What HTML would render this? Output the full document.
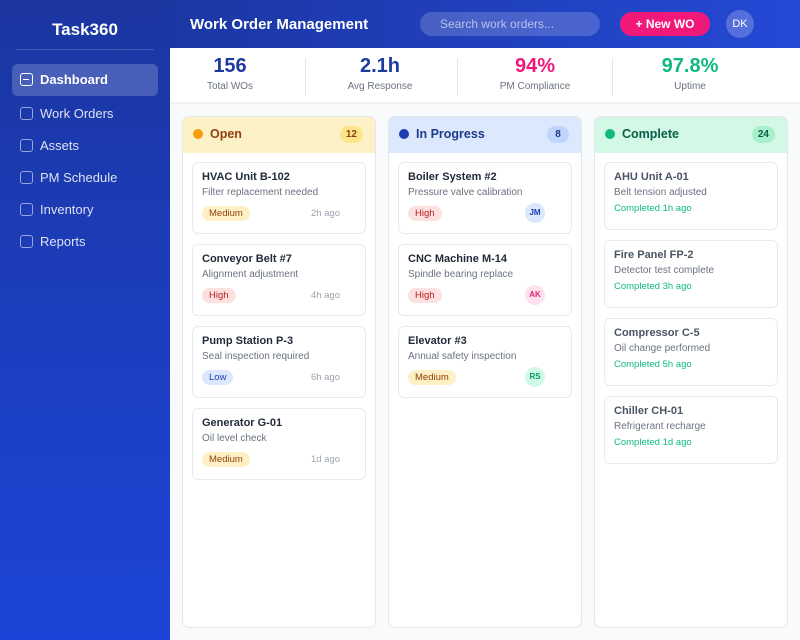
<!DOCTYPE html><html><head><style>
*{margin:0;padding:0;box-sizing:border-box}
body{width:800px;height:640px;overflow:hidden;font-family:"Liberation Sans",sans-serif;background:#f8fafc;position:relative}
.abs{position:absolute}
.side{left:0;top:0;width:170px;height:640px;background:linear-gradient(180deg,#1b36a0 0%,#1c3fc4 60%,#1d44d6 100%)}
.logo{left:0;width:170px;top:20px;text-align:center;color:#fff;font-weight:bold;font-size:17px}
.sl{left:16px;top:49px;width:138px;height:1px;background:rgba(255,255,255,.18)}
.nav{left:12px;width:146px;height:32px;color:rgba(255,255,255,.85);font-size:13px;line-height:32px;padding-left:28px}
.nav i{position:absolute;left:8px;top:9px;width:13px;height:13px;border:1.5px solid rgba(255,255,255,.55);border-radius:3px}
.nav.act{background:rgba(255,255,255,.2);border-radius:6px;color:#fff;font-weight:bold}
.nav.act i{border-color:#fff}
.nav.act i:after{content:"";position:absolute;left:2px;top:4.5px;width:6px;height:1.5px;background:#fff}
.hdr{left:170px;top:0;width:630px;height:48px;background:linear-gradient(90deg,#1b37a3,#2549d6)}
.title{left:190px;top:16px;color:#fff;font-weight:bold;font-size:15px}
.search{left:420px;top:12px;width:180px;height:24px;border-radius:12px;background:rgba(255,255,255,.18);color:rgba(255,255,255,.6);font-size:12px;line-height:24px;padding-left:20px}
.btn{left:620px;top:12px;width:90px;height:24px;border-radius:12px;background:#f0197a;color:#fff;font-weight:bold;font-size:12px;line-height:24px;text-align:center}
.av{left:726px;top:10px;width:28px;height:28px;border-radius:50%;background:rgba(255,255,255,.22);color:#fff;font-size:11px;line-height:28px;text-align:center}
.stats{left:170px;top:48px;width:630px;height:56px;background:#fff;border-bottom:2px solid #eef0f4}
.st{top:54px;width:150px;text-align:center}
.st b{display:block;font-size:20px;line-height:24px}
.st span{display:block;font-size:10px;color:#6b7280;margin-top:3px}
.div{top:58px;width:1px;height:38px;background:#e5e7eb}
.col{top:116px;width:194px;height:512px;background:#fff;border:1px solid #e5e7eb;border-radius:7px;overflow:hidden}
.ch{height:36px;line-height:35px;padding-left:27px;font-weight:bold;font-size:12.5px;position:relative}
.ch .dot{position:absolute;left:10px;top:12px;width:10px;height:10px;border-radius:50%}
.ch .cnt{position:absolute;right:12px;top:9px;height:17px;min-width:22px;padding:0 6px;border-radius:9px;font-size:10px;line-height:17px;text-align:center}
.card{left:9px;width:174px;height:72px;border:1.5px solid #e8eaee;border-radius:6px;background:#fff}
.card h4{position:absolute;left:9px;top:8px;font-size:11px;color:#1f2937}
.card p{position:absolute;left:9px;top:24px;font-size:10px;color:#6b7280}
.tag{position:absolute;left:9px;top:43px;height:15px;padding:0 7px;border-radius:8px;font-size:9.5px;line-height:15px}
.med{background:#fdf0c4;color:#92400e}.high{background:#fde0e0;color:#b91c1c}.low{background:#dbe7fd;color:#1e40af}
.ago{position:absolute;right:25px;top:45px;font-size:9.5px;color:#9ca3af}
.ini{position:absolute;right:26px;top:40px;width:20px;height:20px;border-radius:50%;font-size:8px;font-weight:bold;line-height:20px;text-align:center}
.cc{height:68px}
.cc h4{color:#4b5563}
.done{position:absolute;left:9px;top:40px;font-size:9.5px;color:#10b981}
</style></head><body>
<div class="abs side"></div>
<div class="abs logo">Task360</div>
<div class="abs sl"></div>
<div class="abs nav act" style="top:64px"><i></i>Dashboard</div>
<div class="abs nav" style="top:98px"><i></i>Work Orders</div>
<div class="abs nav" style="top:130px"><i></i>Assets</div>
<div class="abs nav" style="top:162px"><i></i>PM Schedule</div>
<div class="abs nav" style="top:194px"><i></i>Inventory</div>
<div class="abs nav" style="top:226px"><i></i>Reports</div>
<div class="abs hdr"></div>
<div class="abs title">Work Order Management</div>
<div class="abs search">Search work orders...</div>
<div class="abs btn">+ New WO</div>
<div class="abs av">DK</div>
<div class="abs stats"></div>
<div class="abs st" style="left:155px"><b style="color:#1e3a9e">156</b><span>Total WOs</span></div>
<div class="abs div" style="left:305px"></div>
<div class="abs st" style="left:305px"><b style="color:#1e3a9e">2.1h</b><span>Avg Response</span></div>
<div class="abs div" style="left:457px"></div>
<div class="abs st" style="left:460px"><b style="color:#f0197a">94%</b><span>PM Compliance</span></div>
<div class="abs div" style="left:612px"></div>
<div class="abs st" style="left:615px"><b style="color:#10b981">97.8%</b><span>Uptime</span></div>

<div class="abs col" style="left:182px"><div class="ch" style="background:#fdf1c7;color:#92400e"><span class="dot" style="background:#f59e0b"></span>Open<span class="cnt" style="background:#fde68a;color:#92400e">12</span></div>
<div class="abs card" style="top:45px"><h4>HVAC Unit B-102</h4><p>Filter replacement needed</p><span class="tag med">Medium</span><span class="ago">2h ago</span></div>
<div class="abs card" style="top:127px"><h4>Conveyor Belt #7</h4><p>Alignment adjustment</p><span class="tag high">High</span><span class="ago">4h ago</span></div>
<div class="abs card" style="top:209px"><h4>Pump Station P-3</h4><p>Seal inspection required</p><span class="tag low">Low</span><span class="ago">6h ago</span></div>
<div class="abs card" style="top:291px"><h4>Generator G-01</h4><p>Oil level check</p><span class="tag med">Medium</span><span class="ago">1d ago</span></div>
</div>

<div class="abs col" style="left:388px"><div class="ch" style="background:#dbe8fd;color:#1e3a8a"><span class="dot" style="background:#1e40af"></span>In Progress<span class="cnt" style="background:#bfd5fb;color:#1e3a8a">8</span></div>
<div class="abs card" style="top:45px"><h4>Boiler System #2</h4><p>Pressure valve calibration</p><span class="tag high">High</span><span class="ini" style="background:#dbe7fd;color:#1e40af">JM</span></div>
<div class="abs card" style="top:127px"><h4>CNC Machine M-14</h4><p>Spindle bearing replace</p><span class="tag high">High</span><span class="ini" style="background:#fde2ee;color:#db2777">AK</span></div>
<div class="abs card" style="top:209px"><h4>Elevator #3</h4><p>Annual safety inspection</p><span class="tag med">Medium</span><span class="ini" style="background:#d1fae5;color:#059669">RS</span></div>
</div>

<div class="abs col" style="left:594px"><div class="ch" style="background:#d3f8e6;color:#065f46"><span class="dot" style="background:#10b981"></span>Complete<span class="cnt" style="background:#a7f0cc;color:#065f46">24</span></div>
<div class="abs card cc" style="top:45px"><h4>AHU Unit A-01</h4><p>Belt tension adjusted</p><span class="done">Completed 1h ago</span></div>
<div class="abs card cc" style="top:123px"><h4>Fire Panel FP-2</h4><p>Detector test complete</p><span class="done">Completed 3h ago</span></div>
<div class="abs card cc" style="top:201px"><h4>Compressor C-5</h4><p>Oil change performed</p><span class="done">Completed 5h ago</span></div>
<div class="abs card cc" style="top:279px"><h4>Chiller CH-01</h4><p>Refrigerant recharge</p><span class="done">Completed 1d ago</span></div>
</div>
</body></html>
